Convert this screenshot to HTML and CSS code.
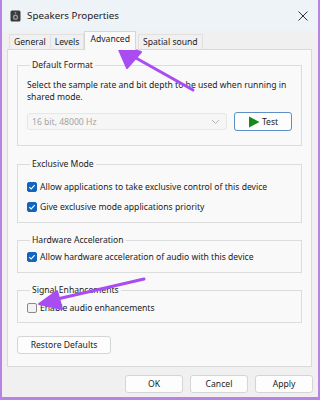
FILE: index.html
```html
<!DOCTYPE html>
<html lang="en">
<head>
  <meta charset="UTF-8" />
  <title>Speakers Properties</title>
  <link rel="stylesheet" href="styles.css">
</head>
<body>
  <div class="window">
    <div class="titlebar">
      <svg class="app-icon" width="11" height="12" viewBox="0 0 11 12">
        <rect x="0.5" y="0.5" width="10" height="11" rx="1.5" fill="#3a3a3a"/>
        <circle cx="5.5" cy="7.2" r="2.6" fill="#9a9a9a"/>
        <circle cx="5.5" cy="7.2" r="1.2" fill="#3a3a3a"/>
        <circle cx="5.5" cy="2.8" r="0.9" fill="#9a9a9a"/>
      </svg>
      <span class="title">Speakers Properties</span>
      <svg class="close" width="10" height="10" viewBox="0 0 10 10">
        <path d="M0.5 0.5 L9.5 9.5 M9.5 0.5 L0.5 9.5" stroke="#333" stroke-width="1"/>
      </svg>
    </div>

    <div class="tabs">
      <div class="tab">General</div>
      <div class="tab">Levels</div>
      <div class="tab active">Advanced</div>
      <div class="tab">Spatial sound</div>
    </div>

    <div class="panel">
      <fieldset class="group format">
        <legend>Default Format</legend>
        <p class="desc">Select the sample rate and bit depth to be used when running in shared mode.</p>
        <div class="format-row">
          <div class="select">
            <span>16 bit, 48000 Hz</span>
            <svg width="9" height="6" viewBox="0 0 9 6"><path d="M1 1 L4.5 4.5 L8 1" fill="none" stroke="#b5b5b5" stroke-width="1"/></svg>
          </div>
          <button class="btn test-btn">
            <svg width="12" height="12" viewBox="0 0 12 12"><path d="M1 0.5 L11.5 6 L1 11.5 Z" fill="#138a1a"/></svg>
            Test
          </button>
        </div>
      </fieldset>

      <fieldset class="group exclusive">
        <legend>Exclusive Mode</legend>
        <label class="check"><span class="box on"></span>Allow applications to take exclusive control of this device</label>
        <label class="check"><span class="box on"></span>Give exclusive mode applications priority</label>
      </fieldset>

      <fieldset class="group hardware">
        <legend>Hardware Acceleration</legend>
        <label class="check"><span class="box on"></span>Allow hardware acceleration of audio with this device</label>
      </fieldset>

      <fieldset class="group signal">
        <legend>Signal Enhancements</legend>
        <label class="check"><span class="box"></span>Enable audio enhancements</label>
      </fieldset>

      <button class="btn restore-btn">Restore Defaults</button>
    </div>

    <div class="footer">
      <button class="btn">OK</button>
      <button class="btn">Cancel</button>
      <button class="btn">Apply</button>
    </div>

    <!-- annotation arrows drawn over the dialog -->
    <svg class="arrows" width="320" height="400" viewBox="0 0 320 400">
      <path d="M193 90 L127 53" stroke="#a94cf2" stroke-width="3" stroke-linecap="round"/>
      <path d="M117 45 L141 52 L127 68 Z" fill="#a94cf2" stroke="#a94cf2" stroke-width="2" stroke-linejoin="round"/>
      <path d="M144 279 L53 300" stroke="#a94cf2" stroke-width="3" stroke-linecap="round"/>
      <path d="M39 304 L57 291 L62 309 Z" fill="#a94cf2" stroke="#a94cf2" stroke-width="2" stroke-linejoin="round"/>
    </svg>
  </div>
</body>
</html>
```

FILE: styles.css
```css
body { margin: 0; background: #fff; font-family: "Noto Sans", "DejaVu Sans", sans-serif; font-size: 8.6px; color: #1b1b1b; }
.window { position: relative; width: 320px; height: 400px; box-sizing: border-box; border-left: 2px solid #b784e6; border-right: 2px solid #b784e6; border-bottom: 3px solid #b784e6; background: #f0f0f0; display: flex; flex-direction: column; overflow: hidden; }

.titlebar { height: 31px; background: #eef3f8; display: flex; align-items: center; padding: 0 10px 0 8px; }
.app-icon { margin-right: 6px; }
.title { font-size: 9.8px; color: #1a1a1a; flex: 1; }

.tabs { height: 18px; display: flex; align-items: flex-end; padding-left: 7px; }
.tab { height: 15px; line-height: 14px; padding: 0 4px; box-sizing: border-box; border: 1px solid #e0e0e0; border-bottom: none; margin-right: -1px; color: #222; background: #f0f0f0; }
.tab.active { height: 19px; line-height: 15px; background: #f9f9f9; border-color: #d6d6d6; position: relative; z-index: 1; margin: 0 2px -1px 1px; padding: 0 5px; }

.panel { height: 318px; box-sizing: border-box; margin: 0 6px 0 5px; border: 1px solid #d9d9d9; background: #f9f9f9; padding: 9px 9px 0; display: flex; flex-direction: column; }

.group { margin: 0; padding: 0 9px; border: 1px solid #dcdcdc; display: flex; flex-direction: column; }
.group legend { padding: 0 2px; margin-left: 3px; line-height: 12px; color: #1b1b1b; }
.format { padding-top: 8px; padding-bottom: 14px; }
.exclusive { margin-top: 12px; padding-top: 7px; padding-bottom: 5px; }
.hardware { margin-top: 11px; padding-top: 1px; padding-bottom: 5px; }
.signal { margin-top: 11px; padding-top: 2px; padding-bottom: 4px; }
.desc { margin: 0; line-height: 12px; }

.format-row { display: flex; gap: 7px; align-items: center; margin-top: 9px; }
.select { width: 200px; height: 17px; box-sizing: border-box; border: 1px solid #e6e6e6; background: #f6f6f6; border-radius: 3px; display: flex; align-items: center; justify-content: space-between; padding: 0 6px 0 4px; color: #a3a3a3; }

.btn { font-family: inherit; font-size: 8.6px; color: #1b1b1b; background: #fdfdfd; border: 1px solid #d5d5d5; border-radius: 3px; height: 18px; padding: 0; cursor: pointer; }
.test-btn { width: 58px; height: 19px; border-color: #5d8fc4; display: flex; align-items: center; justify-content: center; gap: 2px; }
.restore-btn { width: 94px; margin-top: 13px; }

.check { display: flex; align-items: center; gap: 3px; height: 20px; }
.box { width: 10px; height: 10px; box-sizing: border-box; border: 1px solid #8a8a8a; border-radius: 2px; background: #f3f3f3; }
.box.on { border-color: #1264bd; background: #1264bd url("data:image/svg+xml,%3Csvg xmlns='http://www.w3.org/2000/svg' width='10' height='10' viewBox='0 0 10 10'%3E%3Cpath d='M2.3 5.1 L4.2 6.9 L7.7 3.2' fill='none' stroke='white' stroke-width='1.1'/%3E%3C/svg%3E") center / 10px 10px no-repeat; }

.footer { flex: 1; display: flex; justify-content: flex-end; align-items: center; gap: 7px; padding: 3px 5px 0 0; }
.footer .btn { width: 58px; }

.arrows { position: absolute; left: -2px; top: 0; pointer-events: none; }
```
